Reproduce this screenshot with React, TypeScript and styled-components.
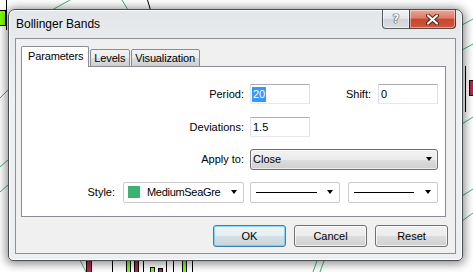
import React from "react";
import styled, { createGlobalStyle, css } from "styled-components";

const GlobalStyle = createGlobalStyle`
  html, body {
    margin: 0;
    padding: 0;
    background: #fff;
    overflow: hidden;
  }
  body {
    font-family: "Liberation Sans", Arial, sans-serif;
    font-size: 11px;
    color: #000;
  }
`;

const Desktop = styled.div`
  position: relative;
  width: 473px;
  height: 272px;
  overflow: hidden;
  background: #fff;
`;

const ChartLayer = styled.svg`
  position: absolute;
  left: 0;
  top: 0;
`;

// the dialog is a window lying on the chart, so it keeps its place on the canvas
const Window = styled.div`
  position: absolute;
  left: 8px;
  top: 9px;
  width: 455px;
  height: 252px;
  box-sizing: border-box;
  display: flex;
  flex-direction: column;
  padding: 0 6px 6px;
  border: 1px solid #4a4d52;
  border-radius: 7px 7px 5px 5px;
  background: linear-gradient(180deg, #e4e7ea 0%, #eff1f3 35%, #eceef0 100%);
  box-shadow: inset 0 0 0 1px rgba(255, 255, 255, 0.85),
    0 1px 10px 2px rgba(0, 0, 0, 0.45);
`;

const TitleBar = styled.div`
  height: 28px;
  flex: none;
  display: flex;
  align-items: flex-start;
  justify-content: space-between;
`;

const Title = styled.div`
  padding: 7px 0 0 1px;
  font-size: 12px;
  line-height: 14px;
  color: #000;
`;

const CaptionButtons = styled.div`
  display: flex;
  height: 19px;
`;

const captionBase = css`
  box-sizing: border-box;
  height: 19px;
  display: flex;
  align-items: center;
  justify-content: center;
  border: 1px solid rgba(40, 40, 40, 0.75);
  border-top: none;
  box-shadow: inset 0 0 0 1px rgba(255, 255, 255, 0.45);
`;

const HelpButton = styled.div`
  ${captionBase}
  width: 27px;
  border-right: none;
  border-radius: 0 0 0 4px;
  background: linear-gradient(180deg, #f3f5f7 0%, #e1e5ea 48%, #cfd4da 52%, #dce0e5 100%);
  color: #fff;
  font-family: "DejaVu Sans", sans-serif;
  font-weight: bold;
  font-size: 12px;
  text-shadow: 0 0 1px #333, 0 0 1px #333, 0 0 1px #333;
`;

const CloseButton = styled.div`
  ${captionBase}
  width: 47px;
  border-radius: 0 0 4px 0;
  background: linear-gradient(180deg, #eaa898 0%, #dc7a66 45%, #c8462f 52%, #d0553f 100%);
`;

const Client = styled.div`
  flex: 1;
  box-sizing: border-box;
  display: flex;
  flex-direction: column;
  padding: 7px 7px 0 5px;
  border: 1px solid #8d9196;
  background: #f0f0f0;
`;

const Tabs = styled.div`
  width: 425px;
`;

const TabStrip = styled.div`
  position: relative;
  z-index: 1;
  display: flex;
  align-items: flex-end;
  height: 21px;
  margin-bottom: -1px;
`;

const Tab = styled.div<{ $active?: boolean }>`
  box-sizing: border-box;
  border: 1px solid #898c95;
  line-height: 13px;
  white-space: nowrap;
  letter-spacing: -0.15px;
  ${(p) =>
    p.$active
      ? css`
          height: 21px;
          padding: 3px 5px 0 6px;
          border-bottom: none;
          border-radius: 2px 2px 0 0;
          background: #fff;
        `
      : css`
          height: 18px;
          padding: 2px 4px 0 3px;
          margin-left: 1px;
          border-radius: 2px 2px 0 0;
          background: linear-gradient(180deg, #f2f2f2 0%, #ebebeb 50%, #dddddd 51%, #cfcfcf 100%);
        `}
`;

const TabPanel = styled.div`
  box-sizing: border-box;
  height: 151px;
  display: flex;
  flex-direction: column;
  gap: 12.7px;
  padding-top: 17px;
  border: 1px solid #898c95;
  background: #fff;
`;

const Row = styled.div`
  display: flex;
  align-items: center;
  height: 20px;
`;

const Label = styled.span<{ $width: number }>`
  flex: none;
  width: ${(p) => p.$width}px;
  text-align: right;
  white-space: nowrap;
`;

const Field = styled.div<{ $gap: number }>`
  box-sizing: border-box;
  flex: none;
  width: 60px;
  height: 20px;
  margin-left: ${(p) => p.$gap}px;
  padding-left: 2px;
  display: flex;
  align-items: center;
  border: 1px solid;
  border-color: #abadb3 #dbdfe6 #e3e9ef #e2e3ea;
  background: #fff;
`;

const Selected = styled.span`
  margin-left: -1px;
  padding: 0 1px;
  line-height: 15px;
  background: #3399ff;
  color: #fff;
`;

const Arrow = styled.span`
  flex: none;
  width: 0;
  height: 0;
  border-left: 3.5px solid transparent;
  border-right: 3.5px solid transparent;
  border-top: 4px solid #000;
`;

const DropList = styled.div<{ $gap: number; $width: number }>`
  box-sizing: border-box;
  flex: none;
  width: ${(p) => p.$width}px;
  height: 21px;
  margin-left: ${(p) => p.$gap}px;
  padding: 0 5px 0 2px;
  display: flex;
  align-items: center;
  justify-content: space-between;
  border: 1px solid #707070;
  border-radius: 3px;
  background: linear-gradient(180deg, #f2f2f2 0%, #ebebeb 50%, #dddddd 51%, #cfcfcf 100%);
  box-shadow: inset 0 0 0 1px rgba(255, 255, 255, 0.6);
`;

const StyleCombo = styled.div<{ $gap: number; $width: number }>`
  box-sizing: border-box;
  flex: none;
  width: ${(p) => p.$width}px;
  height: 21px;
  margin-left: ${(p) => p.$gap}px;
  padding: 0 6px 0 4px;
  display: flex;
  align-items: center;
  border: 1px solid #cacaca;
  border-radius: 2px;
  background: #fff;
`;

const Swatch = styled.span<{ $color: string }>`
  flex: none;
  width: 12px;
  height: 12px;
  margin-right: 7px;
  background: ${(p) => p.$color};
`;

const ComboText = styled.span`
  flex: 1;
  white-space: nowrap;
  overflow: hidden;
  letter-spacing: -0.3px;
`;

const LineSample = styled.span<{ $length: number }>`
  flex: none;
  width: ${(p) => p.$length}px;
  height: 1px;
  margin: 0 auto 0 1px;
  background: #000;
`;

const ButtonRow = styled.div`
  display: flex;
  justify-content: flex-end;
  gap: 8px;
  margin-top: 8px;
`;

const DialogButton = styled.div<{ $default?: boolean }>`
  box-sizing: border-box;
  width: 73px;
  height: 22px;
  display: flex;
  align-items: center;
  justify-content: center;
  border: 1px solid #707070;
  border-radius: 3px;
  background: linear-gradient(180deg, #f2f2f2 0%, #ebebeb 50%, #dddddd 51%, #cfcfcf 100%);
  box-shadow: inset 0 0 0 1px rgba(255, 255, 255, 0.7);
  ${(p) =>
    p.$default &&
    css`
      border-color: #3c7fb1;
      background: linear-gradient(180deg, #f0f4f7 0%, #e6edf2 50%, #d5dfe6 51%, #c8d4dc 100%);
      box-shadow: inset 0 0 0 1px rgba(72, 200, 255, 0.6);
    `}
`;

const Chart = () => (
  <ChartLayer width={473} height={272} viewBox="0 0 473 272">
    <g stroke="#3cb371" strokeWidth={1} fill="none">
      <line x1={52} y1={10} x2={70} y2={0} />
      <line x1={122} y1={0} x2={128} y2={10} />
      <line x1={0} y1={98} x2={8} y2={90} />
      <line x1={0} y1={167} x2={8} y2={160} />
      <line x1={0} y1={192} x2={8} y2={185} />
      <line x1={462} y1={25} x2={473} y2={19} />
      <line x1={462} y1={50} x2={473} y2={44} />
      <line x1={462} y1={124} x2={473} y2={117} />
      <line x1={462} y1={196} x2={473} y2={189} />
      <line x1={462} y1={221} x2={473} y2={213} />
      <line x1={80} y1={260} x2={86} y2={272} />
      <line x1={313} y1={272} x2={318} y2={258} />
      <line x1={320} y1={272} x2={325} y2={258} />
    </g>
    <g stroke="#000" strokeWidth={1}>
      <line x1={147.5} y1={0} x2={150.5} y2={10} />
      <line x1={6.5} y1={0} x2={6.5} y2={30} />
      <line x1={465.5} y1={66} x2={465.5} y2={112} />
      <line x1={112.5} y1={258} x2={112.5} y2={272} />
      <line x1={143.5} y1={258} x2={143.5} y2={272} />
      <line x1={166.5} y1={258} x2={166.5} y2={272} />
      <line x1={173.5} y1={258} x2={173.5} y2={272} />
      <line x1={192.5} y1={258} x2={192.5} y2={272} />
    </g>
    <g stroke="#000" strokeWidth={1}>
      <rect x={-1.5} y={10.5} width={7} height={15} fill="#7fff00" />
      <rect x={469.5} y={80.5} width={6} height={15} fill="#b22a45" />
      <rect x={86.5} y={258.5} width={5} height={16} fill="#b22a45" />
      <rect x={126.5} y={258.5} width={4} height={16} fill="#7fff00" />
      <rect x={134.5} y={258.5} width={4} height={16} fill="#b22a45" />
      <rect x={150.5} y={267.5} width={4} height={8} fill="#7fff00" />
      <rect x={158.5} y={268.5} width={4} height={8} fill="#b22a45" />
      <rect x={182.5} y={258.5} width={4} height={16} fill="#7fff00" />
    </g>
  </ChartLayer>
);

const CloseGlyph = () => (
  <svg width={13} height={11} viewBox="0 0 13 11">
    <path
      d="M2 1.5 L11 9.5 M11 1.5 L2 9.5"
      stroke="#5a1a10"
      strokeWidth={4}
      strokeLinecap="round"
    />
    <path
      d="M2 1.5 L11 9.5 M11 1.5 L2 9.5"
      stroke="#fff"
      strokeWidth={2.2}
      strokeLinecap="round"
    />
  </svg>
);

const App: React.FC = () => {
  return (
    <>
      <GlobalStyle />
      <Desktop>
        <Chart />
        <Window>
          <TitleBar>
            <Title>Bollinger Bands</Title>
            <CaptionButtons>
              <HelpButton>?</HelpButton>
              <CloseButton>
                <CloseGlyph />
              </CloseButton>
            </CaptionButtons>
          </TitleBar>
          <Client>
            <Tabs>
              <TabStrip>
                <Tab $active>Parameters</Tab>
                <Tab>Levels</Tab>
                <Tab>Visualization</Tab>
              </TabStrip>
              <TabPanel>
                <Row>
                  <Label $width={222}>Period:</Label>
                  <Field $gap={6}>
                    <Selected>20</Selected>
                  </Field>
                  <Label $width={61}>Shift:</Label>
                  <Field $gap={7}>0</Field>
                </Row>
                <Row>
                  <Label $width={222}>Deviations:</Label>
                  <Field $gap={6}>1.5</Field>
                </Row>
                <Row>
                  <Label $width={222}>Apply to:</Label>
                  <DropList $gap={6} $width={188}>
                    <span>Close</span>
                    <Arrow />
                  </DropList>
                </Row>
                <Row>
                  <Label $width={93}>Style:</Label>
                  <StyleCombo $gap={8} $width={121}>
                    <Swatch $color="#3cb371" />
                    <ComboText>MediumSeaGre</ComboText>
                    <Arrow />
                  </StyleCombo>
                  <StyleCombo $gap={6} $width={90}>
                    <LineSample $length={61} />
                    <Arrow />
                  </StyleCombo>
                  <StyleCombo $gap={8} $width={90}>
                    <LineSample $length={60} />
                    <Arrow />
                  </StyleCombo>
                </Row>
              </TabPanel>
            </Tabs>
            <ButtonRow>
              <DialogButton $default>OK</DialogButton>
              <DialogButton>Cancel</DialogButton>
              <DialogButton>Reset</DialogButton>
            </ButtonRow>
          </Client>
        </Window>
      </Desktop>
    </>
  );
};

export default App;
